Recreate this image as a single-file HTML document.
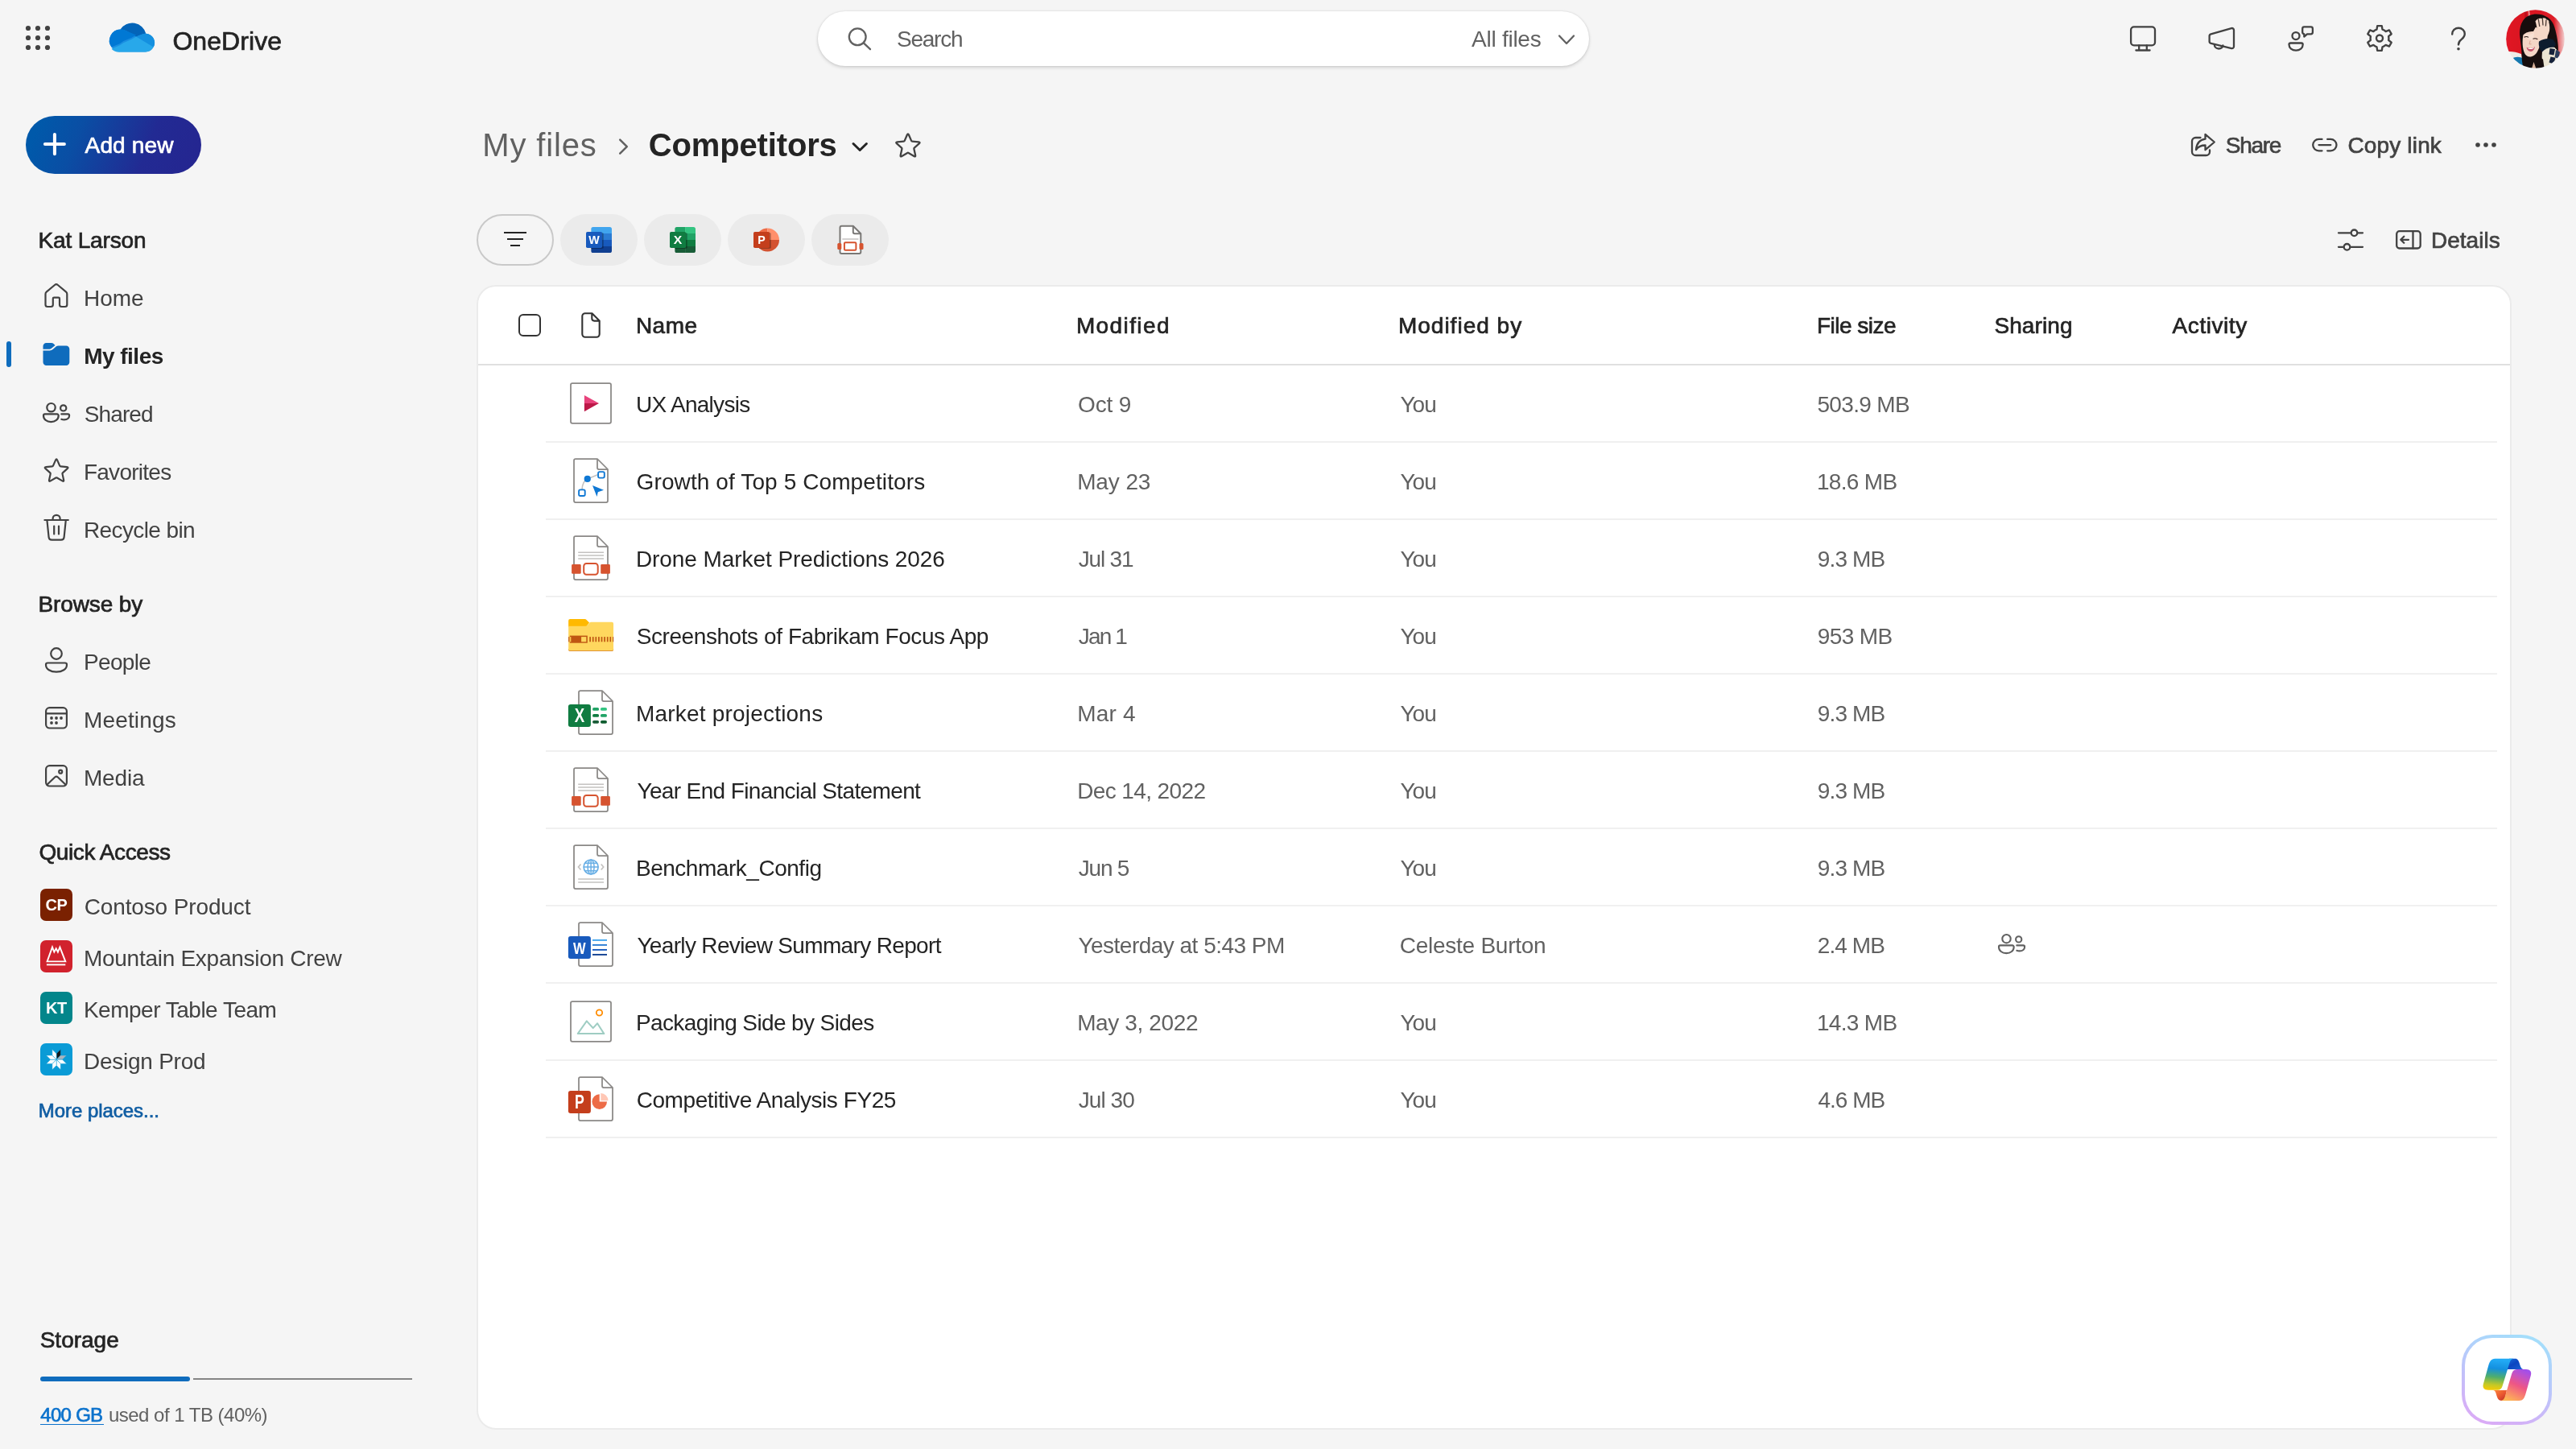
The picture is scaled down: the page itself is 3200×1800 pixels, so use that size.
<!DOCTYPE html>
<html lang="en"><head><meta charset="utf-8"><title>Competitors - OneDrive</title>
<style>
html,body{margin:0;padding:0;}
body{width:3200px;height:1800px;overflow:hidden;background:#f5f5f5;font-family:"Liberation Sans",Arial,sans-serif;position:relative;}
.t{position:absolute;white-space:pre;}
.a{position:absolute;}
svg{position:absolute;overflow:visible;}
.pill{position:absolute;top:266px;width:96px;height:64px;border-radius:32px;background:#ebebeb;}
.tile{position:absolute;left:50px;width:40px;height:40px;border-radius:7px;}
.div{position:absolute;left:678px;width:2424px;height:2px;background:#f0f0f0;}
</style></head><body>
<div id="root" style="position:absolute;left:0;top:0;width:3200px;height:1800px;will-change:transform;">

<header>
<svg style="left:0px;top:0px" width="96" height="96" viewBox="0 0 96 96" ><g fill="#424242"><circle cx="35" cy="35" r="3.100"/><circle cx="35" cy="47" r="3.100"/><circle cx="35" cy="59" r="3.100"/><circle cx="47" cy="35" r="3.100"/><circle cx="47" cy="47" r="3.100"/><circle cx="47" cy="59" r="3.100"/><circle cx="59" cy="35" r="3.100"/><circle cx="59" cy="47" r="3.100"/><circle cx="59" cy="59" r="3.100"/></g></svg>
<svg style="left:136px;top:18.75px" width="56" height="56" viewBox="0 0 32 32" ><path d="M7.800 10a10 10 0 0 1 17.700 3h.4a6.500 6.500 0 0 1 5.300 9.600A6.500 6.500 0 0 1 25.500 26H8A8 8 0 0 1 1.400 22.600 8 8 0 0 1 7.800 10z" fill="#1a8ee0"/>
<path d="M12.200 11.200l6.700 4 4-1.700a6.500 6.500 0 0 1 2.600-.5h.4A10 10 0 0 0 7.800 10a8 8 0 0 1 4.400 1.200z" fill="#0364b8"/>
<path d="M12.200 11.200A8 8 0 0 0 7.800 10h-.1A8 8 0 0 0 1.400 22.600l5.900-2.500 2.600-1.800 5.900-2.500 3.100-1.800z" fill="#0078d4"/>
<path d="M25.900 13h-.4a6.500 6.500 0 0 0-2.600.5l-4 1.700 1.200.7 3.800 2.300 1.700 1 5.700 3.400A6.500 6.500 0 0 0 25.900 13z" fill="#1490df"/>
<path d="M25.600 19.200l-1.700-1-3.800-2.300-1.200-.7-3.100 1.800-5.900 2.500-2.600 1.800-5.900 2.500A8 8 0 0 0 8 26h17.500a6.500 6.500 0 0 0 5.700-3.400z" fill="#28a8ea"/></svg>
<div class="a" style="left:1016px;top:14px;width:958px;height:68px;border-radius:34px;background:#fff;box-shadow:0 2px 4px rgba(0,0,0,.14),0 0 3px rgba(0,0,0,.12);"></div>
<svg style="left:1040px;top:20px" width="56" height="56" viewBox="1040 20 56 56" ><g fill="none" stroke="#616161" stroke-width="2.3" stroke-linecap="round" stroke-linejoin="round"><circle cx="1065.200" cy="45.800" r="10.400"/><path d="M1072.800 53.400L1081 61.200"/></g></svg>
<svg style="left:1930px;top:36px" width="32" height="28" viewBox="1930 36 32 28" ><path d="M1937 44.500l9 9.500 9-9.500" fill="none" stroke="#616161" stroke-width="2.3" stroke-linecap="round" stroke-linejoin="round"/></svg>
<svg style="left:2640px;top:26px" width="44" height="44" viewBox="2640 26 44 44" ><g fill="none" stroke="#424242" stroke-width="2.3" stroke-linecap="round" stroke-linejoin="round"><rect x="2647.100" y="33.400" width="29.900" height="22.900" rx="3.800"/><path d="M2657.200 56.500v6M2666.800 56.500v6M2653.400 62.500h17.200"/></g></svg>
<svg style="left:2738px;top:26px" width="44" height="44" viewBox="2738 26 44 44" ><g fill="none" stroke="#424242" stroke-width="2.3" stroke-linecap="round" stroke-linejoin="round"><path d="M2744.600 44.800v6.600c0 1.200 .8 2.200 2 2.500l25.500 6.200c1.500 .4 2.900-.7 2.900-2.300v-20.400c0-1.600-1.500-2.700-3-2.300l-25.500 7.200c-1.100 .3-1.900 1.300-1.900 2.500z"/><path d="M2750.800 55.300c0 3 2.300 5.200 5.300 5.200 2.700 0 4.900-1.800 5.300-4.200"/></g></svg>
<svg style="left:2836px;top:26px" width="44" height="44" viewBox="2836 26 44 44" ><g fill="none" stroke="#424242" stroke-width="2.3" stroke-linecap="round" stroke-linejoin="round"><circle cx="2852" cy="44.600" r="4.500"/><path d="M2845.400 53.500h13.500c1 0 1.800 .8 1.800 1.800 0 4.400-3.700 7.300-8.600 7.300s-8.600-2.900-8.600-7.300c0-1 .8-1.800 1.900-1.800z"/><path d="M2862.300 33.400h8.300c1.300 0 2.300 1 2.300 2.300v4.400c0 1.300-1 2.300-2.300 2.300h-4.600l-3.700 3.200v-3.300c-1.200-.2-2.100-1.100-2.100-2.300v-4.300c0-1.300 1-2.300 2.100-2.300z"/></g></svg>
<svg style="left:2934px;top:26px" width="44" height="44" viewBox="2934 26 44 44" ><g fill="none" stroke="#424242" stroke-width="2.4" stroke-linecap="round" stroke-linejoin="round"><path d="M2952.48,36.66 L2953.24,32.15 L2958.76,32.15 L2959.52,36.66 A11.4,11.4 0 0 1 2963.63,39.03 L2963.63,39.03 L2967.92,37.43 L2970.68,42.22 L2967.15,45.13 A11.4,11.4 0 0 1 2967.15,49.87 L2967.15,49.87 L2970.68,52.78 L2967.92,57.57 L2963.63,55.97 A11.4,11.4 0 0 1 2959.52,58.34 L2959.52,58.34 L2958.76,62.85 L2953.24,62.85 L2952.48,58.34 A11.4,11.4 0 0 1 2948.37,55.97 L2948.37,55.97 L2944.08,57.57 L2941.32,52.78 L2944.85,49.87 A11.4,11.4 0 0 1 2944.85,45.13 L2944.85,45.13 L2941.32,42.22 L2944.08,37.43 L2948.37,39.03 A11.4,11.4 0 0 1 2952.48,36.66 Z"/><circle cx="2956" cy="47.500" r="4"/></g></svg>
<svg style="left:3032px;top:26px" width="44" height="44" viewBox="3032 26 44 44" ><g fill="none" stroke="#424242" stroke-width="2.4" stroke-linecap="round" stroke-linejoin="round"><path d="M3046.200 42.500c0-4.600 3.400-7.700 7.800-7.700s7.800 3 7.800 7.300c0 3.600-2 5.300-4.300 7-2.200 1.700-3.500 3-3.500 6.300"/></g><circle cx="3054" cy="60.800" r="1.800" fill="#424242"/></svg>
<svg style="left:3113px;top:11.5px" width="73" height="73" viewBox="0 0 73 73" ><defs><clipPath id="avc"><circle cx="36.500" cy="36.500" r="36.300"/></clipPath>
<filter id="avb" x="-10%" y="-10%" width="120%" height="120%"><feGaussianBlur stdDeviation="0.700"/></filter>
<linearGradient id="avr" x1="0" y1="0" x2="1" y2="0"><stop offset="0" stop-color="#e21a27"/><stop offset=".3" stop-color="#d9141f"/><stop offset=".80" stop-color="#dd1c28"/><stop offset=".9" stop-color="#ea8a8c"/><stop offset="1" stop-color="#f6ecec"/></linearGradient></defs>
<g clip-path="url(#avc)"><g filter="url(#avb)">
<rect x="-2" y="-2" width="77" height="77" fill="url(#avr)"/>
<path d="M23 -1h2.500l1.500 24-3 10z" fill="#b30f1b" opacity=".75"/>
<path d="M27.500 -1h1.500l1 9-2 3z" fill="#f2c4c4" opacity=".7"/>
<path d="M-2 53c6-2 13-1 21 2l5 20H-2z" fill="#efece6"/>
<path d="M7 61c5-3 10-3 15 0l4 14H4z" fill="#1479b0"/>
<path d="M17.400 34c-1.500-15 4-26 16-28 12-2 24 4 27 16 3 10 5 22 4.500 30-.5 8-3 15-8 23H22c-2-8-2.500-14-2.500-20 0-7-1.300-13-2.100-21z" fill="#15100f"/>
<path d="M21 34c.5-8 6-13.500 13-13 6.500 .5 9.500 6 9.500 14 0 6-1.500 12-4.500 17-2 4-5.500 6.500-9.500 6.500-5 0-7.500-5-8.500-12-.6-4.500-.4-8.500 0-12.500z" fill="#f4d6c6"/>
<path d="M24 30c3 1.500 7.500 1 11-1.500l-1 9c-4 .5-8-1-10-4z" fill="#f8e2d6" opacity=".8"/>
<path d="M19.500 33c2-9 9-14.500 18-12.500l-3.500 6.500c-5.500-.5-10.500 1.500-14.500 6z" fill="#15100f"/>
<path d="M22.500 34.200c2-.9 4-.9 5.500 .2M33.500 36.200c2-.8 4-.6 5.800 .6" stroke="#2b1a17" stroke-width="1.100" fill="none"/>
<path d="M30.200 38.500l-1.200 4.300h2.600" stroke="#dba793" stroke-width="1" fill="none"/>
<path d="M25.500 46.800c3.500 1.700 7.500 1.500 10.500-.8-.7 4-3 6-5.500 6s-4.300-2-5-5.200z" fill="#c4566a"/>
<path d="M26.600 47.400c2.800 1 6 .9 8.600-.6-.7 1.500-2.300 2.300-4.300 2.300s-3.500-.6-4.300-1.700z" fill="#fff"/>
<path d="M36.500 14.500c1.500-3 5-4.500 8-3.500 2-1.500 5-.8 6 1.200 2.800 .5 4.300 3.300 4.300 6.300 0 5-1 10-3 14l-1 6.500-9 2c-2-6-2-11-3-16-.6-4-1.300-7.500-2.300-10.500z" fill="#f5d8c8"/>
<path d="M40.200 11.500l1.600 9.500M45.300 10.500l.7 9M50 12.500l-.6 8" stroke="#2a1c18" stroke-width="1.300" fill="none" opacity=".85"/>
<path d="M53 14c4 3 6.500 8 7.500 14l-6 4c.5-6 0-12-1.500-18z" fill="#15100f"/>
<path d="M41 39.500c5-3.500 12-4.500 17.500-2.500l3.500 5.500c-1 4-3 7-6 9l-10.500 2c-3.500-4-5.500-9-4.500-14z" fill="#0f1b2e"/>
<path d="M45 52.500c4-4.500 10-6.500 15.500-5.500l4.500 5c1 6-2 14-7 22H47c-2-7.500-3-14.500-2-21.500z" fill="#ebe4d2"/>
<path d="M54.500 48l6.500 1-1.500 7.500-6-1zM55.500 58.500l6 1.200-2.200 7.800-5.800-2z" fill="#15243a"/>
<path d="M62 50c2 .5 4 1.500 5 3l-2 8c-1.500-1-3-1.500-4.500-1.800z" fill="#2a3d5c"/>
<path d="M22 56c3.500 3.500 9 4.500 14 1.500l10 4 2 14H21z" fill="#15100f"/>
<path d="M34.500 65l3.500 10h-6.500z" fill="#d9b09a"/>
</g></g></svg>
<div class="t" style="left:214.42px;top:35.00px;font-size:32px;line-height:32px;letter-spacing:0.077px;color:#242424;-webkit-text-stroke:0.700px currentColor;">OneDrive</div>
<div class="t" style="left:1113.91px;top:35.00px;font-size:28px;line-height:28px;letter-spacing:-1.202px;color:#616161;">Search</div>
<div class="t" style="left:1827.97px;top:35.00px;font-size:28px;line-height:28px;letter-spacing:-0.245px;color:#616161;">All files</div>
</header>
<nav>
<div class="a" style="left:32px;top:144px;width:218px;height:72px;border-radius:36px;background:linear-gradient(112deg,#0059aa 8%,#0a4ea4 30%,#222a93 68%,#252590 100%);"></div>
<svg style="left:50px;top:160px" width="40" height="40" viewBox="50 160 40 40" ><path d="M67.900 167v24.200M55.900 179.100h24" fill="none" stroke="#fff" stroke-width="4" stroke-linecap="round"/></svg>
<div class="a" style="left:8px;top:424px;width:6px;height:32px;border-radius:3px;background:#0f6cbd;"></div>
<svg style="left:48px;top:344px" width="44" height="44" viewBox="48 344 44 44" ><path d="M56.500 365.200c0-1 .4-1.900 1.200-2.500l10.300-8.700c1.100-.9 2.700-.9 3.800 0l10.300 8.700c.8 .6 1.200 1.500 1.200 2.500v13.300c0 1.400-1.100 2.500-2.500 2.500h-4.300c-1.400 0-2.500-1.100-2.500-2.500v-7.500c0-.7-.6-1.300-1.300-1.300h-5.600c-.7 0-1.300 .6-1.300 1.300v7.500c0 1.400-1.100 2.500-2.500 2.500h-4.300c-1.400 0-2.500-1.100-2.500-2.500z" fill="none" stroke="#424242" stroke-width="2.2" stroke-linecap="round" stroke-linejoin="round"/></svg>
<svg style="left:48px;top:418px" width="44" height="44" viewBox="48 418 44 44" ><path d="M53.500 432.300v-2.300c0-2.200 1.800-4 4-4h6.400c1 0 2 .4 2.700 1.100l1.900 1.800-4.600 3.900c-.7 .6-1.600 .9-2.500 .9h-7.900z" fill="#0f6cbd"/><path d="M53.500 435.400h8.300c1.400 0 2.700-.5 3.800-1.400l4.300-3.700c.7-.6 1.600-.9 2.500-.9h9.900c2.200 0 4 1.800 4 4v16.600c0 2.200-1.800 4-4 4H57.500c-2.200 0-4-1.800-4-4z" fill="#0f6cbd"/></svg>
<svg style="left:46.9px;top:494.2px" width="48" height="38" viewBox="46.9 494.2 48 38"><g transform="translate(52.9 500.2)" fill="none" stroke="#424242" stroke-width="2.2" stroke-linecap="round" stroke-linejoin="round"><circle cx="10.500" cy="6.200" r="5.200"/><path d="M2.800 14.400h15.100a1.800 1.800 0 0 1 1.800 1.800c0 4.800-4 7.900-9.350 7.900s-9.350-3.100-9.350-7.900a1.800 1.800 0 0 1 1.800-1.800z"/><circle cx="25.700" cy="6.900" r="3.600"/><path d="M23.300 14.400h8a1.800 1.800 0 0 1 1.800 1.800c0 3-2.600 5.200-6.300 5.200-1.300 0-2.500-.2-3.500-.6"/></g></svg>
<svg style="left:48px;top:562px" width="44" height="44" viewBox="48 562 44 44" ><path d="M69.05,571.58 Q70.10,569.20 71.15,571.58 L74.24,578.62 Q74.57,579.35 75.36,579.43 L83.02,580.20 Q85.60,580.46 83.66,582.19 L77.92,587.32 Q77.33,587.85 77.50,588.63 L79.13,596.15 Q79.68,598.69 77.43,597.38 L70.79,593.50 Q70.10,593.10 69.41,593.50 L62.77,597.38 Q60.52,598.69 61.07,596.15 L62.70,588.63 Q62.87,587.85 62.28,587.32 L56.54,582.19 Q54.60,580.46 57.18,580.20 L64.84,579.43 Q65.63,579.35 65.96,578.62 Z" fill="none" stroke="#424242" stroke-width="2.2" stroke-linecap="round" stroke-linejoin="round"/></svg>
<svg style="left:48px;top:634px" width="44" height="44" viewBox="48 634 44 44" ><g fill="none" stroke="#424242" stroke-width="2.2" stroke-linecap="round" stroke-linejoin="round"><path d="M55.400 646h29.400M65.600 646v-1.700c0-2.500 2-4.400 4.500-4.400s4.500 1.900 4.500 4.400v1.700"/><path d="M58.400 646l2.200 21.400c.2 1.900 1.800 3.300 3.700 3.300h11.600c1.900 0 3.500-1.400 3.700-3.300l2.200-21.400"/><path d="M67.200 653.500v10M73 653.500v10"/></g></svg>
<svg style="left:48px;top:798px" width="44" height="44" viewBox="48 798 44 44" ><g fill="none" stroke="#424242" stroke-width="2.2" stroke-linecap="round" stroke-linejoin="round"><circle cx="70" cy="812" r="6.800"/><path d="M59.200 823.500h21.600c1.200 0 2.200 1 2.200 2.200 0 5.600-5.600 8.900-13 8.900s-13-3.300-13-8.900c0-1.200 1-2.200 2.200-2.200z"/></g></svg>
<svg style="left:48px;top:870px" width="44" height="44" viewBox="48 870 44 44" ><g fill="none" stroke="#424242" stroke-width="2.2" stroke-linecap="round" stroke-linejoin="round"><rect x="57.100" y="879.100" width="25.800" height="25.400" rx="4.500"/><path d="M57.100 886.300h25.800"/><circle cx="64" cy="892" r="1.900" fill="#424242" stroke="none"/><circle cx="70" cy="892" r="1.900" fill="#424242" stroke="none"/><circle cx="76" cy="892" r="1.900" fill="#424242" stroke="none"/><circle cx="64" cy="898" r="1.900" fill="#424242" stroke="none"/><circle cx="70" cy="898" r="1.900" fill="#424242" stroke="none"/></g></svg>
<svg style="left:48px;top:942px" width="44" height="44" viewBox="48 942 44 44" ><g fill="none" stroke="#424242" stroke-width="2.2" stroke-linecap="round" stroke-linejoin="round"><rect x="57.100" y="951.100" width="25.800" height="25.400" rx="4.500"/><circle cx="75.200" cy="958.700" r="2"/><path d="M58.500 974.800l9.600-9.300c1.100-1 2.700-1 3.800 0l9.600 9.300"/></g></svg>
<div class="tile" style="top:1104px;background:#7a2101;"></div>
<div class="t" style="left:50px;top:1113px;width:40px;text-align:center;color:#fff;font-size:20px;line-height:22px;font-weight:bold;letter-spacing:-0.400px;">CP</div>
<div class="tile" style="top:1168px;background:#d1222d;"></div>
<svg style="left:50px;top:1168px" width="40" height="40" viewBox="0 0 40 40" ><path d="M8.600 26.400L15 8.600l2.300 6 2.400-4.400 2.200 4.400 2.500-6 6.900 17.800z" fill="none" stroke="#fff" stroke-width="1.900" stroke-linejoin="miter"/><path d="M7.900 30.400h23.400" stroke="#fff" stroke-width="1.900" fill="none"/></svg>
<div class="tile" style="top:1232px;background:#03868b;"></div>
<div class="t" style="left:50px;top:1241px;width:40px;text-align:center;color:#fff;font-size:20px;line-height:22px;font-weight:bold;letter-spacing:-0.400px;">KT</div>
<div class="tile" style="top:1296px;background:#0a9bd6;"></div>
<svg style="left:50px;top:1296px" width="40" height="40" viewBox="-20.100 -20.200 40 40" ><path d="M0,0L0.00,-7.40L5.23,-12.63L5.23,-5.23z" fill="#15171a" stroke="#0a9bd6" stroke-width=".5"/><path d="M0,0L5.23,-5.23L12.63,-5.23L7.40,0.00z" fill="#a9b4bd" stroke="#0a9bd6" stroke-width=".5"/><path d="M0,0L7.40,0.00L12.63,5.23L5.23,5.23z" fill="#fff" stroke="#0a9bd6" stroke-width=".5"/><path d="M0,0L5.23,5.23L5.23,12.63L0.00,7.40z" fill="#fff" stroke="#0a9bd6" stroke-width=".5"/><path d="M0,0L0.00,7.40L-5.23,12.63L-5.23,5.23z" fill="#fff" stroke="#0a9bd6" stroke-width=".5"/><path d="M0,0L-5.23,5.23L-12.63,5.23L-7.40,0.00z" fill="#fff" stroke="#0a9bd6" stroke-width=".5"/><path d="M0,0L-7.40,0.00L-12.63,-5.23L-5.23,-5.23z" fill="#fff" stroke="#0a9bd6" stroke-width=".5"/><path d="M0,0L-5.23,-5.23L-5.23,-12.63L-0.00,-7.40z" fill="#fff" stroke="#0a9bd6" stroke-width=".5"/></svg>
<div class="a" style="left:50px;top:1709.500px;width:185.600px;height:6.500px;border-radius:3.250px;background:#0f6cbd;"></div>
<div class="a" style="left:239.700px;top:1712px;width:272.300px;height:2px;background:#858585;"></div>
<div class="t" style="left:105.59px;top:167.00px;font-size:28px;line-height:28px;letter-spacing:0.136px;color:#ffffff;-webkit-text-stroke:0.700px currentColor;">Add new</div>
<div class="t" style="left:47.52px;top:285.00px;font-size:28px;line-height:28px;letter-spacing:-0.164px;color:#242424;-webkit-text-stroke:0.700px currentColor;">Kat Larson</div>
<div class="t" style="left:103.93px;top:357.00px;font-size:28px;line-height:28px;letter-spacing:0.025px;color:#424242;">Home</div>
<div class="t" style="left:104.16px;top:429.00px;font-size:28px;line-height:28px;letter-spacing:-0.514px;color:#242424;font-weight:bold;">My files</div>
<div class="t" style="left:103.93px;top:573.00px;font-size:28px;line-height:28px;letter-spacing:-0.740px;color:#424242;">Favorites</div>
<div class="t" style="left:103.93px;top:645.00px;font-size:28px;line-height:28px;letter-spacing:-0.606px;color:#424242;">Recycle bin</div>
<div class="t" style="left:47.52px;top:737.00px;font-size:28px;line-height:28px;letter-spacing:-0.131px;color:#242424;-webkit-text-stroke:0.700px currentColor;">Browse by</div>
<div class="t" style="left:103.93px;top:809.00px;font-size:28px;line-height:28px;letter-spacing:-0.635px;color:#424242;">People</div>
<div class="t" style="left:103.93px;top:881.00px;font-size:28px;line-height:28px;letter-spacing:0.164px;color:#424242;">Meetings</div>
<div class="t" style="left:103.93px;top:953.00px;font-size:28px;line-height:28px;letter-spacing:-0.163px;color:#424242;">Media</div>
<div class="t" style="left:48.44px;top:1045.00px;font-size:28px;line-height:28px;letter-spacing:-0.403px;color:#242424;-webkit-text-stroke:0.700px currentColor;">Quick Access</div>
<div class="t" style="left:104.68px;top:1113.00px;font-size:28px;line-height:28px;letter-spacing:-0.129px;color:#424242;">Contoso Product</div>
<div class="t" style="left:103.93px;top:1177.00px;font-size:28px;line-height:28px;letter-spacing:-0.270px;color:#424242;">Mountain Expansion Crew</div>
<div class="t" style="left:103.93px;top:1241.00px;font-size:28px;line-height:28px;letter-spacing:-0.500px;color:#424242;">Kemper Table Team</div>
<div class="t" style="left:103.93px;top:1305.00px;font-size:28px;line-height:28px;letter-spacing:-0.243px;color:#424242;">Design Prod</div>
<div class="t" style="left:47.85px;top:1368.00px;font-size:24px;line-height:24px;letter-spacing:-0.047px;color:#115ea3;-webkit-text-stroke:0.700px currentColor;">More places...</div>
<div class="t" style="left:49.69px;top:1651.00px;font-size:28px;line-height:28px;letter-spacing:-0.003px;color:#242424;-webkit-text-stroke:0.700px currentColor;">Storage</div>
<div class="t" style="left:50.24px;top:1746.00px;font-size:24px;line-height:24px;letter-spacing:-0.702px;color:#0c72cc;-webkit-text-stroke:0.700px currentColor;">400 GB</div>
<div class="t" style="left:134.90px;top:1746.00px;font-size:24px;line-height:24px;letter-spacing:-0.510px;color:#616161;">used of 1 TB (40%)</div>
<div class="a" style="left:50px;top:1768.5px;width:78.5px;height:1.6px;background:#0c72cc;"></div>
</nav>
<main>
<svg style="left:760px;top:164px" width="30" height="40" viewBox="760 164 30 40" ><path d="M770.200 173.700l8.600 8.500-8.600 8.500" fill="none" stroke="#616161" stroke-width="2.5" stroke-linecap="round" stroke-linejoin="round"/></svg>
<svg style="left:1050px;top:168px" width="36" height="30" viewBox="1050 168 36 30" ><path d="M1060 178.500l8.200 8 8.200-8" fill="none" stroke="#242424" stroke-width="3" stroke-linecap="round" stroke-linejoin="round"/></svg>
<svg style="left:1104px;top:158px" width="48" height="48" viewBox="1104 158 48 48" ><path d="M1126.86,167.58 Q1127.90,165.20 1128.94,167.58 L1132.11,174.84 Q1132.43,175.57 1133.22,175.65 L1141.10,176.42 Q1143.69,176.67 1141.74,178.40 L1135.82,183.65 Q1135.22,184.18 1135.40,184.96 L1137.10,192.69 Q1137.66,195.23 1135.42,193.91 L1128.59,189.91 Q1127.90,189.50 1127.21,189.91 L1120.38,193.91 Q1118.14,195.23 1118.70,192.69 L1120.40,184.96 Q1120.58,184.18 1119.98,183.65 L1114.06,178.40 Q1112.11,176.67 1114.70,176.42 L1122.58,175.65 Q1123.37,175.57 1123.69,174.84 Z" fill="none" stroke="#424242" stroke-width="2.3" stroke-linecap="round" stroke-linejoin="round"/></svg>
<svg style="left:2714px;top:158px" width="48" height="48" viewBox="2714 158 48 48" ><g fill="none" stroke="#424242" stroke-width="2.3" stroke-linecap="round" stroke-linejoin="round"><path d="M2733.500 171h-6c-2.500 0-4.500 2-4.500 4.500v13c0 2.500 2 4.500 4.500 4.500h13c2.500 0 4.500-2 4.500-4.500v-2"/><path d="M2739.500 166.800l11.300 9.700-11.300 9.700v-5.700c-5.500 0-8.700 1.500-11.500 5.500 .6-7.400 4.500-12.400 11.500-13.300z"/></g></svg>
<svg style="left:2866px;top:160px" width="44" height="40" viewBox="2866 160 44 40" ><g fill="none" stroke="#424242" stroke-width="2.3" stroke-linecap="round" stroke-linejoin="round"><path d="M2884.500 172.900h-4c-4 0-7.300 3.200-7.300 7.200s3.300 7.200 7.300 7.200h4M2891.200 172.900h4c4 0 7.300 3.200 7.300 7.200s-3.300 7.200-7.300 7.200h-4M2880.500 180.100h14.800"/></g></svg>
<svg style="left:3068px;top:170px" width="40" height="20" viewBox="3068 170 40 20" ><g fill="#424242"><circle cx="3078" cy="180" r="2.800"/><circle cx="3088" cy="180" r="2.800"/><circle cx="3098" cy="180" r="2.800"/></g></svg>
<svg style="left:2896px;top:276px" width="48" height="44" viewBox="2896 276 48 44" ><g fill="none" stroke="#424242" stroke-width="2.3" stroke-linecap="round" stroke-linejoin="round"><path d="M2905 289.300h14.500M2929.500 289.300h5.500M2905 306.800h5.500M2920.500 306.800h14.500"/><circle cx="2924.500" cy="289.300" r="3.800"/><circle cx="2915.500" cy="306.800" r="3.800"/></g></svg>
<svg style="left:2970px;top:278px" width="44" height="40" viewBox="2970 278 44 40" ><g fill="none" stroke="#424242" stroke-width="2.3" stroke-linecap="round" stroke-linejoin="round"><rect x="2977.200" y="287.200" width="29.500" height="21.300" rx="3.500"/><path d="M2997.500 287.500v20.800M2992 297.800h-9.500M2986.300 293.800l-4 4 4 4"/></g></svg>
<div class="pill" style="left:592px;background:transparent;box-sizing:border-box;border:2px solid #c9c9c9;"></div>
<svg style="left:620px;top:280px" width="40" height="36" viewBox="620 280 40 36" ><path d="M626 289h28M630 297h20M634 305h12" fill="none" stroke="#242424" stroke-width="2" stroke-linecap="butt"/></svg>
<div class="pill" style="left:696px"></div>
<div class="pill" style="left:800px"></div>
<div class="pill" style="left:904px"></div>
<div class="pill" style="left:1008px"></div>
<svg style="left:728px;top:282px" width="32" height="32" viewBox="0 0 32 32" ><defs><clipPath id="ocW"><rect x="6.200" y="0" width="25.800" height="32" rx="2.600"/></clipPath></defs>
<g clip-path="url(#ocW)"><rect x="6.200" y="0" width="25.800" height="8.200" fill="#41a5ee"/><rect x="6.200" y="8" width="25.800" height="8.200" fill="#2b7cd3"/><rect x="6.200" y="16" width="25.800" height="8.200" fill="#185abd"/><rect x="6.200" y="24" width="25.800" height="8.200" fill="#103f91"/><rect x="2" y="7" width="20" height="20" rx="1.800" fill="#000" opacity=".22"/><rect x="1" y="6.500" width="20" height="20" rx="1.800" fill="#000" opacity=".12"/></g>
<rect x="0" y="6" width="20" height="20" rx="1.800" fill="#185abd"/>
<text x="10" y="21.400" text-anchor="middle" font-family="Liberation Sans, Arial, sans-serif" font-weight="bold" font-size="15" fill="#fff" textLength="13.5" lengthAdjust="spacingAndGlyphs">W</text></svg>
<svg style="left:832px;top:282px" width="32" height="32" viewBox="0 0 32 32" ><defs><clipPath id="ocX"><rect x="6.200" y="0" width="25.800" height="32" rx="2.600"/></clipPath></defs>
<g clip-path="url(#ocX)"><rect x="6.200" y="0" width="13" height="8.200" fill="#21a366"/><rect x="19.100" y="0" width="12.900" height="8.200" fill="#33c481"/><rect x="6.200" y="8" width="13" height="8.200" fill="#107c41"/><rect x="19.100" y="8" width="12.900" height="8.200" fill="#21a366"/><rect x="6.200" y="16" width="13" height="8.200" fill="#107c41"/><rect x="19.100" y="16" width="12.900" height="8.200" fill="#107c41"/><rect x="6.200" y="24" width="13" height="8.200" fill="#185c37"/><rect x="19.100" y="24" width="12.900" height="8.200" fill="#185c37"/><rect x="2" y="7" width="20" height="20" rx="1.800" fill="#000" opacity=".22"/><rect x="1" y="6.500" width="20" height="20" rx="1.800" fill="#000" opacity=".12"/></g>
<rect x="0" y="6" width="20" height="20" rx="1.800" fill="#107c41"/>
<text x="10" y="21.400" text-anchor="middle" font-family="Liberation Sans, Arial, sans-serif" font-weight="bold" font-size="15" fill="#fff" textLength="10.5" lengthAdjust="spacingAndGlyphs">X</text></svg>
<svg style="left:936.2px;top:282px" width="34" height="32" viewBox="0 0 34 32" ><defs><clipPath id="ocP"><circle cx="17.400" cy="16" r="14.600"/></clipPath></defs>
<g clip-path="url(#ocP)"><rect x="0" y="0" width="17.400" height="16" fill="#ed6c47"/><rect x="17.400" y="0" width="16" height="16" fill="#ff8f6b"/><rect x="0" y="16" width="34" height="17" fill="#d35230"/>
<rect x="2" y="7" width="20" height="20" rx="1.800" fill="#000" opacity=".22"/><rect x="1" y="6.500" width="20" height="20" rx="1.800" fill="#000" opacity=".12"/></g>
<rect x="0" y="6" width="20" height="20" rx="1.800" fill="#c43e1c"/>
<text x="10" y="21.400" text-anchor="middle" font-family="Liberation Sans, Arial, sans-serif" font-weight="bold" font-size="15" fill="#fff" textLength="9.500" lengthAdjust="spacingAndGlyphs">P</text></svg>
<svg style="left:1036px;top:276px" width="42" height="44" viewBox="1036 276 42 44" ><path d="M1045.500 280.800h14.300l9.500 9.500v22.600c0 1.100-.9 2-2 2h-21.800c-1.100 0-2-.9-2-2v-30.100c0-1.100 .9-2 2-2z" fill="#fff" stroke="#797775" stroke-width="2" stroke-linejoin="round"/>
<path d="M1059.800 281v7.300c0 1.100 .9 2 2 2h7.300" fill="none" stroke="#797775" stroke-width="2" stroke-linejoin="round"/>
<path d="M1046.300 297h20.200" stroke="#c8c6c4" stroke-width="1.600" fill="none"/>
<rect x="1040.300" y="302" width="5" height="8" rx="1.500" fill="#d6532f"/><rect x="1067.500" y="302" width="5" height="8" rx="1.500" fill="#d6532f"/>
<rect x="1048.900" y="301.300" width="14.500" height="9.500" rx="1.300" fill="#fff" stroke="#d6532f" stroke-width="2"/></svg>
<div class="t" style="left:104.72px;top:501.00px;font-size:28px;line-height:28px;letter-spacing:-0.875px;color:#424242;">Shared</div>
<div class="t" style="left:599.24px;top:160.00px;font-size:40px;line-height:40px;letter-spacing:0.863px;color:#616161;">My files</div>
<div class="t" style="left:805.74px;top:160.00px;font-size:40px;line-height:40px;letter-spacing:-0.144px;color:#242424;font-weight:bold;">Competitors</div>
<div class="t" style="left:2764.84px;top:167.00px;font-size:28px;line-height:28px;letter-spacing:-1.278px;color:#424242;-webkit-text-stroke:0.700px currentColor;">Share</div>
<div class="t" style="left:2916.39px;top:167.00px;font-size:28px;line-height:28px;letter-spacing:0.167px;color:#424242;-webkit-text-stroke:0.700px currentColor;">Copy link</div>
<div class="t" style="left:3019.89px;top:285.00px;font-size:28px;line-height:28px;letter-spacing:0.036px;color:#424242;-webkit-text-stroke:0.700px currentColor;">Details</div>
<section>
<div class="a" style="left:592px;top:354px;width:2524px;height:1418px;border:2px solid #ebebeb;border-radius:24px;background:#fff;"></div>
<div class="a" style="left:594px;top:452px;width:2524px;height:2px;background:#e0e0e0;"></div>
<div class="div" style="top:548px"></div>
<div class="div" style="top:644px"></div>
<div class="div" style="top:740px"></div>
<div class="div" style="top:836px"></div>
<div class="div" style="top:932px"></div>
<div class="div" style="top:1028px"></div>
<div class="div" style="top:1124px"></div>
<div class="div" style="top:1220px"></div>
<div class="div" style="top:1316px"></div>
<div class="div" style="top:1412px"></div>
<div class="a" style="left:644px;top:390px;width:28px;height:28px;box-sizing:border-box;border:2.100px solid #333;border-radius:6px;"></div>
<svg style="left:716px;top:382px" width="36" height="44" viewBox="716 382 36 44" ><path d="M726.900 389.200h8.600l9.200 9.200v16.700c0 2-1.600 3.600-3.600 3.600h-14.200c-2 0-3.600-1.600-3.600-3.600v-22.300c0-2 1.600-3.600 3.600-3.600z M735.300 389.500v6.100c0 1.700 1.300 3 3 3h6.200" fill="none" stroke="#333" stroke-width="2.1" stroke-linecap="round" stroke-linejoin="round"/></svg>
<svg style="left:694.00px;top:461.00px" width="80.00" height="80.00" viewBox="-40 -40 80 80"><rect x="-25" y="-24.900" width="50" height="49.700" rx="2" fill="#fff" stroke="#8a8886" stroke-width="1.750"/><path d="M-8.100,-10.100L10,-0.100L-8.100,-0.100z" fill="#e8437c"/><path d="M-8.100,-0.100L10,-0.100L-8.100,10.200z" fill="#bc1948"/></svg>
<svg style="left:694.00px;top:557.00px" width="80.00" height="80.00" viewBox="-40 -40 80 80"><path d="M-19.0,-27.0 h27 l13,13 v39 a2,2 0 0 1 -2,2 h-38 a2,2 0 0 1 -2,-2 v-50 a2,2 0 0 1 2,-2z" fill="#fff" stroke="#8a8886" stroke-width="1.75" stroke-linejoin="round"/><path d="M8.0,-27.0 v11 a2,2 0 0 0 2,2 h11" fill="none" stroke="#8a8886" stroke-width="1.75" stroke-linejoin="round"/><path d="M-11,11 C-10.500,3 -8,-0.500 -4.250,-2.100 M-4.250,-2.100 L9,-7.500" fill="none" stroke="#c4c2c0" stroke-width="1.600"/><circle cx="-4.250" cy="-2.100" r="4.100" fill="#0f78d4"/><rect x="9.100" y="-10.900" width="7.700" height="7.500" rx="1.800" fill="#fff" stroke="#0f78d4" stroke-width="1.900"/><rect x="-14.900" y="11.400" width="7.600" height="7.600" rx="1.800" fill="#fff" stroke="#0f78d4" stroke-width="1.900"/><path d="M2,6L16,11.800L8.800,14.300L7.500,19.900z" fill="#0f78d4"/></svg>
<svg style="left:694.00px;top:653.00px" width="80.00" height="80.00" viewBox="-40 -40 80 80"><path d="M-19.0,-27.0 h27 l13,13 v39 a2,2 0 0 1 -2,2 h-38 a2,2 0 0 1 -2,-2 v-50 a2,2 0 0 1 2,-2z" fill="#fff" stroke="#8a8886" stroke-width="1.75" stroke-linejoin="round"/><path d="M8.0,-27.0 v11 a2,2 0 0 0 2,2 h11" fill="none" stroke="#8a8886" stroke-width="1.75" stroke-linejoin="round"/><path d="M-15.800,-6.800h31.800M-15.800,-2.900h31.800M-15.800,1h31.800" stroke="#c4c2c0" stroke-width="1.500" fill="none"/><rect x="-23.900" y="8.100" width="11.600" height="11.700" rx="1.300" fill="#d6532f"/><rect x="12.200" y="8.100" width="11.700" height="11.700" rx="1.300" fill="#d6532f"/><rect x="-8.800" y="7.100" width="17.500" height="13.700" rx="3.300" fill="#fff" stroke="#d6532f" stroke-width="2"/></svg>
<svg style="left:694.00px;top:749.00px" width="80.00" height="80.00" viewBox="-40 -40 80 80"><path d="M-27.850,-17.900a2,2 0 0 1 2,-2h18.300a3,3 0 0 1 2.100,.9l3.500,3.500-4,5.300h-21.900z" fill="#ffb900"/><path d="M-27.850,-11.200h21.300a3,3 0 0 0 2.300,-1.100l2.200,-2.800a3,3 0 0 1 2.300,-1.100h25.800a2,2 0 0 1 2,2v32.100a2,2 0 0 1 -2,2h-51.900a2,2 0 0 1 -2,-2z" fill="#ffd75e"/><path d="M-27.850,17.900v0a2,2 0 0 0 2,2h51.900a2,2 0 0 0 2,-2v-0.900h-55.900z" fill="#cf6f1c" opacity=".85"/><path d="M-27.850,17.200v0a2,2 0 0 0 2,2h51.900a2,2 0 0 0 2,-2v-0.500h-55.900z" fill="#ffd75e"/><rect x="-26.200" y="0.600" width="22" height="9.100" fill="#bf5712"/><rect x="-27.850" y="2.100" width="1.200" height="6.200" fill="#bf5712"/><rect x="-25.900" y="2.100" width="1.200" height="6.200" fill="#ffd75e"/><rect x="-11.900" y="2.100" width="6.200" height="6.200" fill="#ffd75e"/><rect x="-1.75" y="2.100" width="1.7" height="6.200" fill="#bf5712"/><rect x="1.85" y="2.100" width="1.7" height="6.200" fill="#bf5712"/><rect x="5.45" y="2.100" width="1.7" height="6.200" fill="#bf5712"/><rect x="9.05" y="2.100" width="1.7" height="6.200" fill="#bf5712"/><rect x="12.65" y="2.100" width="1.7" height="6.200" fill="#bf5712"/><rect x="16.25" y="2.100" width="1.7" height="6.200" fill="#bf5712"/><rect x="19.85" y="2.100" width="1.7" height="6.200" fill="#bf5712"/><rect x="23.45" y="2.100" width="1.7" height="6.200" fill="#bf5712"/><rect x="27.05" y="2.100" width="1.1" height="6.200" fill="#bf5712"/></svg>
<svg style="left:694.00px;top:845.00px" width="80.00" height="80.00" viewBox="-40 -40 80 80"><g transform="translate(6 0)"><path d="M-19.0,-27.0 h27 l13,13 v39 a2,2 0 0 1 -2,2 h-38 a2,2 0 0 1 -2,-2 v-50 a2,2 0 0 1 2,-2z" fill="#fff" stroke="#8a8886" stroke-width="1.75" stroke-linejoin="round"/><path d="M8.0,-27.0 v11 a2,2 0 0 0 2,2 h11" fill="none" stroke="#8a8886" stroke-width="1.75" stroke-linejoin="round"/></g><rect x="2" y="-5.9" width="8.100" height="3.700" rx="1.850" fill="#21a366"/><rect x="11.900" y="-5.9" width="8.100" height="3.700" rx="1.850" fill="#33c481"/><rect x="2" y="2.1" width="8.100" height="3.700" rx="1.850" fill="#107c41"/><rect x="11.900" y="2.1" width="8.100" height="3.700" rx="1.850" fill="#21a366"/><rect x="2" y="10" width="8.100" height="3.700" rx="1.850" fill="#185c37"/><rect x="11.900" y="10" width="8.100" height="3.700" rx="1.850" fill="#0e5c2f"/><rect x="-28.100" y="-10" width="28" height="28" rx="3" fill="#107c41"/><text x="-14.100" y="11.800" text-anchor="middle" font-family="Liberation Sans, Arial, sans-serif" font-weight="bold" font-size="23.5" fill="#fff" textLength="12.4" lengthAdjust="spacingAndGlyphs">X</text></svg>
<svg style="left:694.00px;top:941.00px" width="80.00" height="80.00" viewBox="-40 -40 80 80"><path d="M-19.0,-27.0 h27 l13,13 v39 a2,2 0 0 1 -2,2 h-38 a2,2 0 0 1 -2,-2 v-50 a2,2 0 0 1 2,-2z" fill="#fff" stroke="#8a8886" stroke-width="1.75" stroke-linejoin="round"/><path d="M8.0,-27.0 v11 a2,2 0 0 0 2,2 h11" fill="none" stroke="#8a8886" stroke-width="1.75" stroke-linejoin="round"/><path d="M-15.800,-6.800h31.800M-15.800,-2.900h31.800M-15.800,1h31.800" stroke="#c4c2c0" stroke-width="1.500" fill="none"/><rect x="-23.900" y="8.100" width="11.600" height="11.700" rx="1.300" fill="#d6532f"/><rect x="12.200" y="8.100" width="11.700" height="11.700" rx="1.300" fill="#d6532f"/><rect x="-8.800" y="7.100" width="17.500" height="13.700" rx="3.300" fill="#fff" stroke="#d6532f" stroke-width="2"/></svg>
<svg style="left:694.00px;top:1037.00px" width="80.00" height="80.00" viewBox="-40 -40 80 80"><path d="M-19.0,-27.0 h27 l13,13 v39 a2,2 0 0 1 -2,2 h-38 a2,2 0 0 1 -2,-2 v-50 a2,2 0 0 1 2,-2z" fill="#fff" stroke="#8a8886" stroke-width="1.75" stroke-linejoin="round"/><path d="M8.0,-27.0 v11 a2,2 0 0 0 2,2 h11" fill="none" stroke="#8a8886" stroke-width="1.75" stroke-linejoin="round"/><circle cx="0.100" cy="0" r="9" fill="none" stroke="#69afe5" stroke-width="1.700"/><ellipse cx="0.100" cy="0" rx="4" ry="9" fill="none" stroke="#69afe5" stroke-width="1.500"/><path d="M-8.900,0h18M-7.400,-4.800h15M-7.400,4.800h15M0.100,-9v18" stroke="#69afe5" stroke-width="1.500" fill="none"/><path d="M-12.500,-3.500l-3,3.500 3,3.500M12.700,-3.500l3,3.500-3,3.500" fill="none" stroke="#c4c2c0" stroke-width="1.700"/><path d="M-15.800,14.900h31.800M-15.800,19h31.800" stroke="#c4c2c0" stroke-width="1.500" fill="none"/></svg>
<svg style="left:694.00px;top:1133.00px" width="80.00" height="80.00" viewBox="-40 -40 80 80"><g transform="translate(6 0)"><path d="M-19.0,-27.0 h27 l13,13 v39 a2,2 0 0 1 -2,2 h-38 a2,2 0 0 1 -2,-2 v-50 a2,2 0 0 1 2,-2z" fill="#fff" stroke="#8a8886" stroke-width="1.75" stroke-linejoin="round"/><path d="M8.0,-27.0 v11 a2,2 0 0 0 2,2 h11" fill="none" stroke="#8a8886" stroke-width="1.75" stroke-linejoin="round"/></g><path d="M2,-5.1h18" stroke="#41a5ee" stroke-width="1.900"/><path d="M2,0.9h18" stroke="#2b7cd3" stroke-width="1.900"/><path d="M2,6.9h18" stroke="#185abd" stroke-width="1.900"/><path d="M2,12.9h18" stroke="#103f91" stroke-width="1.900"/><rect x="-28.100" y="-10" width="28" height="28" rx="3" fill="#185abd"/><text x="-14.100" y="11.800" text-anchor="middle" font-family="Liberation Sans, Arial, sans-serif" font-weight="bold" font-size="20.5" fill="#fff" textLength="15.6" lengthAdjust="spacingAndGlyphs">W</text></svg>
<svg style="left:694.00px;top:1229.00px" width="80.00" height="80.00" viewBox="-40 -40 80 80"><rect x="-25" y="-24.900" width="50" height="49.700" rx="2" fill="#fff" stroke="#8a8886" stroke-width="1.750"/><circle cx="10.500" cy="-11" r="3.700" fill="none" stroke="#ff8c00" stroke-width="1.800"/><path d="M-16.300,15.100L-5.200,-0.600L2.700,8.100L8.100,2.200L16.300,15.100z" fill="none" stroke="#9fcdc3" stroke-width="2" stroke-linejoin="round"/></svg>
<svg style="left:694.00px;top:1325.00px" width="80.00" height="80.00" viewBox="-40 -40 80 80"><g transform="translate(6 0)"><path d="M-19.0,-27.0 h27 l13,13 v39 a2,2 0 0 1 -2,2 h-38 a2,2 0 0 1 -2,-2 v-50 a2,2 0 0 1 2,-2z" fill="#fff" stroke="#8a8886" stroke-width="1.75" stroke-linejoin="round"/><path d="M8.0,-27.0 v11 a2,2 0 0 0 2,2 h11" fill="none" stroke="#8a8886" stroke-width="1.75" stroke-linejoin="round"/></g><path d="M12.300,2.200v-9.200a9.200,9.200 0 0 1 9.200,9.200z" fill="#ffc7b5"/><path d="M10.700,-5.700a9.300,9.300 0 1 0 9.300,9.300h-9.300z" fill="#ed6c47"/><rect x="-28.100" y="-10" width="28" height="28" rx="3" fill="#c43e1c"/><text x="-14.100" y="11.800" text-anchor="middle" font-family="Liberation Sans, Arial, sans-serif" font-weight="bold" font-size="23.5" fill="#fff" textLength="11.8" lengthAdjust="spacingAndGlyphs">P</text></svg>
<svg style="left:2476.2px;top:1153.6px" width="48" height="38" viewBox="2476.2 1153.6 48 38"><g transform="translate(2482.2 1159.6)" fill="none" stroke="#616161" stroke-width="2.1" stroke-linecap="round" stroke-linejoin="round"><circle cx="10.500" cy="6.200" r="5.200"/><path d="M2.800 14.400h15.100a1.800 1.800 0 0 1 1.800 1.800c0 4.800-4 7.900-9.350 7.900s-9.350-3.100-9.350-7.900a1.800 1.800 0 0 1 1.800-1.800z"/><circle cx="25.700" cy="6.900" r="3.600"/><path d="M23.300 14.400h8a1.800 1.800 0 0 1 1.800 1.800c0 3-2.600 5.200-6.300 5.200-1.300 0-2.500-.2-3.500-.6"/></g></svg>
<div class="t" style="left:789.89px;top:391.00px;font-size:28px;line-height:28px;letter-spacing:0.481px;color:#242424;-webkit-text-stroke:0.700px currentColor;">Name</div>
<div class="t" style="left:1336.89px;top:391.00px;font-size:28px;line-height:28px;letter-spacing:1.395px;color:#242424;-webkit-text-stroke:0.700px currentColor;">Modified</div>
<div class="t" style="left:1736.89px;top:391.00px;font-size:28px;line-height:28px;letter-spacing:1.013px;color:#242424;-webkit-text-stroke:0.700px currentColor;">Modified by</div>
<div class="t" style="left:2256.89px;top:391.00px;font-size:28px;line-height:28px;letter-spacing:-0.513px;color:#242424;-webkit-text-stroke:0.700px currentColor;">File size</div>
<div class="t" style="left:2477.41px;top:391.00px;font-size:28px;line-height:28px;letter-spacing:0.095px;color:#242424;-webkit-text-stroke:0.700px currentColor;">Sharing</div>
<div class="t" style="left:2698.59px;top:391.00px;font-size:28px;line-height:28px;letter-spacing:0.561px;color:#242424;-webkit-text-stroke:0.700px currentColor;">Activity</div>
<div class="t" style="left:790.02px;top:489.00px;font-size:28px;line-height:28px;letter-spacing:-0.724px;color:#242424;">UX Analysis</div>
<div class="t" style="left:1339.11px;top:489.00px;font-size:28px;line-height:28px;letter-spacing:-0.156px;color:#616161;">Oct 9</div>
<div class="t" style="left:1739.41px;top:489.00px;font-size:28px;line-height:28px;letter-spacing:-0.974px;color:#616161;">You</div>
<div class="t" style="left:2257.47px;top:489.00px;font-size:28px;line-height:28px;letter-spacing:-0.674px;color:#616161;">503.9 MB</div>
<div class="t" style="left:790.60px;top:585.00px;font-size:28px;line-height:28px;letter-spacing:0.104px;color:#242424;">Growth of Top 5 Competitors</div>
<div class="t" style="left:1338.16px;top:585.00px;font-size:28px;line-height:28px;letter-spacing:-0.106px;color:#616161;">May 23</div>
<div class="t" style="left:1739.41px;top:585.00px;font-size:28px;line-height:28px;letter-spacing:-0.974px;color:#616161;">You</div>
<div class="t" style="left:2256.98px;top:585.00px;font-size:28px;line-height:28px;letter-spacing:-0.681px;color:#616161;">18.6 MB</div>
<div class="t" style="left:789.93px;top:681.00px;font-size:28px;line-height:28px;letter-spacing:-0.070px;color:#242424;">Drone Market Predictions 2026</div>
<div class="t" style="left:1339.80px;top:681.00px;font-size:28px;line-height:28px;letter-spacing:-1.202px;color:#616161;">Jul 31</div>
<div class="t" style="left:1739.41px;top:681.00px;font-size:28px;line-height:28px;letter-spacing:-0.974px;color:#616161;">You</div>
<div class="t" style="left:2257.76px;top:681.00px;font-size:28px;line-height:28px;letter-spacing:-0.856px;color:#616161;">9.3 MB</div>
<div class="t" style="left:790.72px;top:777.00px;font-size:28px;line-height:28px;letter-spacing:-0.425px;color:#242424;">Screenshots of Fabrikam Focus App</div>
<div class="t" style="left:1339.80px;top:777.00px;font-size:28px;line-height:28px;letter-spacing:-1.868px;color:#616161;">Jan 1</div>
<div class="t" style="left:1739.41px;top:777.00px;font-size:28px;line-height:28px;letter-spacing:-0.974px;color:#616161;">You</div>
<div class="t" style="left:2257.76px;top:777.00px;font-size:28px;line-height:28px;letter-spacing:-0.615px;color:#616161;">953 MB</div>
<div class="t" style="left:789.93px;top:873.00px;font-size:28px;line-height:28px;letter-spacing:0.203px;color:#242424;">Market projections</div>
<div class="t" style="left:1338.16px;top:873.00px;font-size:28px;line-height:28px;letter-spacing:0.215px;color:#616161;">Mar 4</div>
<div class="t" style="left:1739.41px;top:873.00px;font-size:28px;line-height:28px;letter-spacing:-0.974px;color:#616161;">You</div>
<div class="t" style="left:2257.76px;top:873.00px;font-size:28px;line-height:28px;letter-spacing:-0.856px;color:#616161;">9.3 MB</div>
<div class="t" style="left:791.41px;top:969.00px;font-size:28px;line-height:28px;letter-spacing:-0.627px;color:#242424;">Year End Financial Statement</div>
<div class="t" style="left:1338.16px;top:969.00px;font-size:28px;line-height:28px;letter-spacing:-0.605px;color:#616161;">Dec 14, 2022</div>
<div class="t" style="left:1739.41px;top:969.00px;font-size:28px;line-height:28px;letter-spacing:-0.974px;color:#616161;">You</div>
<div class="t" style="left:2257.76px;top:969.00px;font-size:28px;line-height:28px;letter-spacing:-0.856px;color:#616161;">9.3 MB</div>
<div class="t" style="left:789.93px;top:1065.00px;font-size:28px;line-height:28px;letter-spacing:-0.470px;color:#242424;">Benchmark_Config</div>
<div class="t" style="left:1339.80px;top:1065.00px;font-size:28px;line-height:28px;letter-spacing:-1.231px;color:#616161;">Jun 5</div>
<div class="t" style="left:1739.41px;top:1065.00px;font-size:28px;line-height:28px;letter-spacing:-0.974px;color:#616161;">You</div>
<div class="t" style="left:2257.76px;top:1065.00px;font-size:28px;line-height:28px;letter-spacing:-0.856px;color:#616161;">9.3 MB</div>
<div class="t" style="left:791.41px;top:1161.00px;font-size:28px;line-height:28px;letter-spacing:-0.658px;color:#242424;">Yearly Review Summary Report</div>
<div class="t" style="left:1339.47px;top:1161.00px;font-size:28px;line-height:28px;letter-spacing:-0.518px;color:#616161;">Yesterday at 5:43 PM</div>
<div class="t" style="left:1738.68px;top:1161.00px;font-size:28px;line-height:28px;letter-spacing:-0.251px;color:#616161;">Celeste Burton</div>
<div class="t" style="left:2257.77px;top:1161.00px;font-size:28px;line-height:28px;letter-spacing:-0.908px;color:#616161;">2.4 MB</div>
<div class="t" style="left:789.93px;top:1257.00px;font-size:28px;line-height:28px;letter-spacing:-0.614px;color:#242424;">Packaging Side by Sides</div>
<div class="t" style="left:1338.16px;top:1257.00px;font-size:28px;line-height:28px;letter-spacing:-0.375px;color:#616161;">May 3, 2022</div>
<div class="t" style="left:1739.41px;top:1257.00px;font-size:28px;line-height:28px;letter-spacing:-0.974px;color:#616161;">You</div>
<div class="t" style="left:2256.98px;top:1257.00px;font-size:28px;line-height:28px;letter-spacing:-0.681px;color:#616161;">14.3 MB</div>
<div class="t" style="left:790.68px;top:1353.00px;font-size:28px;line-height:28px;letter-spacing:-0.429px;color:#242424;">Competitive Analysis FY25</div>
<div class="t" style="left:1339.80px;top:1353.00px;font-size:28px;line-height:28px;letter-spacing:-0.957px;color:#616161;">Jul 30</div>
<div class="t" style="left:1739.41px;top:1353.00px;font-size:28px;line-height:28px;letter-spacing:-0.974px;color:#616161;">You</div>
<div class="t" style="left:2258.47px;top:1353.00px;font-size:28px;line-height:28px;letter-spacing:-0.999px;color:#616161;">4.6 MB</div>
</section>
</main>
<div class="a" style="left:3058px;top:1658px;width:112px;height:112px;border-radius:38px;background:linear-gradient(200deg,#9fe3fb 0%,#b9c8fb 45%,#e0a6f5 100%);"></div>
<div class="a" style="left:3062px;top:1662px;width:104px;height:104px;border-radius:34px;background:#fff;"></div>
<svg style="left:3083.5px;top:1687px" width="60.5" height="53.6" viewBox="0 0 60.500 53.600" ><defs>
<linearGradient id="cpa" x1="0.1" y1="0" x2="0" y2="1"><stop offset="0" stop-color="#22aaf5"/><stop offset=".28" stop-color="#1490df"/><stop offset=".55" stop-color="#4fae6c"/><stop offset=".8" stop-color="#c4c926"/><stop offset="1" stop-color="#ffcb00"/></linearGradient>
<linearGradient id="cpb" x1="0.75" y1="0" x2="0.3" y2="1"><stop offset="0" stop-color="#a24fea"/><stop offset=".22" stop-color="#c452c4"/><stop offset=".5" stop-color="#ee5685"/><stop offset=".78" stop-color="#f98a6a"/><stop offset="1" stop-color="#fdb456"/></linearGradient>
<linearGradient id="cpc" x1="0" y1="0" x2="1" y2="1"><stop offset="0" stop-color="#1a73e0"/><stop offset=".45" stop-color="#0b45c0"/><stop offset="1" stop-color="#1d63d6"/></linearGradient>
<linearGradient id="cpd" x1="0" y1="0" x2="1" y2="1"><stop offset="0" stop-color="#ff8a3d"/><stop offset=".55" stop-color="#e8552f"/><stop offset="1" stop-color="#b52a2a"/></linearGradient>
</defs>
<path d="M33 0.700H40.500C43.500 0.700 44.800 3.200 45.700 6.200C46.800 10 47.600 14.100 52 14.100H29.500z" fill="url(#cpc)"/>
<path d="M13 40H30L27.200 52.900H23.500C20 52.900 18.600 50.500 17.700 47.600C16.700 44.300 16 40 13 40z" fill="url(#cpd)"/>
<path d="M15.500 0.700H38.200C35.500 1.200 34.300 3.200 33.400 6.200L24.600 34.800C23.600 38 21.600 39.800 18.400 39.800H6.800C1.800 39.800 -0.400 36.800 0.900 32.300L7 10.200C8.600 4.400 10.600 0.700 15.500 0.700z" fill="url(#cpa)"/>
<path d="M45.200 52.900H22.800C25.500 52.400 27 50.400 27.900 47.400L36.200 19.600C37.200 16.200 39.200 14.100 42.600 14.100H54C59 14.100 61.200 17.100 59.900 21.600L53.600 43.900C52 49.700 50 52.900 45.200 52.900z" fill="url(#cpb)"/></svg>
</div></body></html>
